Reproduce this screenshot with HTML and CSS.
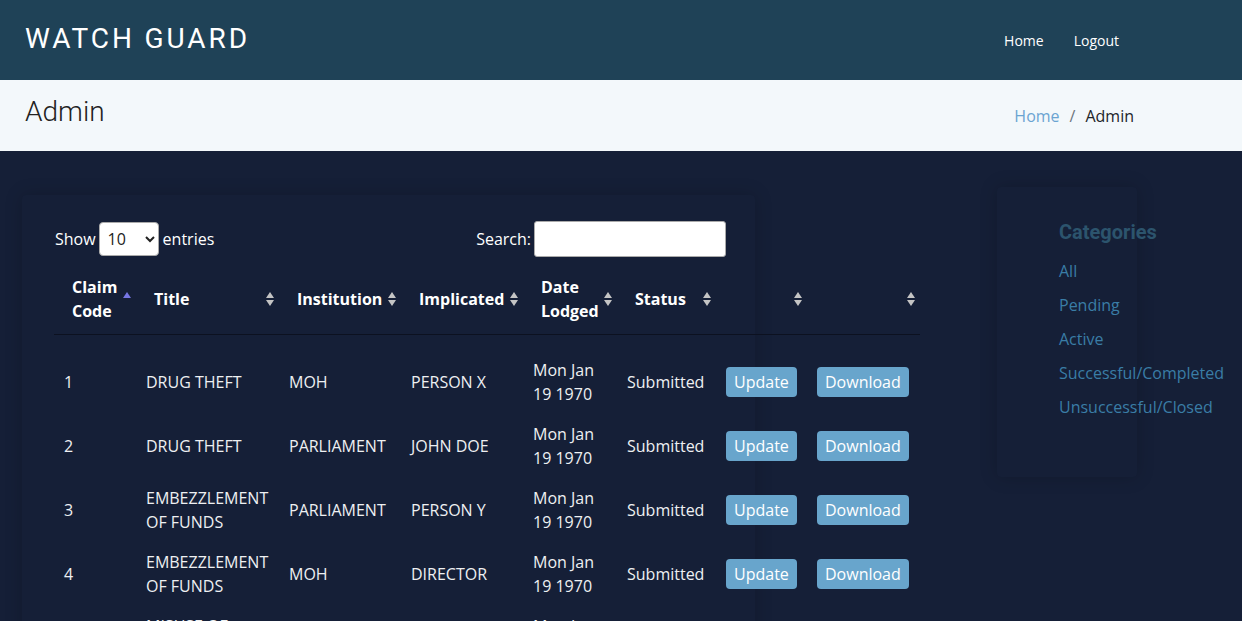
FILE: index.html
```html
<!DOCTYPE html>
<html lang="en">
<head>
<meta charset="utf-8">
<title>Watch Guard - Admin</title>
<link rel="stylesheet" href="styles.css">
</head>
<body>
<header class="topbar">
  <div class="brand">WATCH GUARD</div>
  <nav class="nav">
    <a href="#">Home</a>
    <a href="#">Logout</a>
  </nav>
</header>
<section class="pagebar">
  <h2 class="page-title">Admin</h2>
  <ol class="crumbs">
    <li><a href="#">Home</a></li>
    <li class="sep">/</li>
    <li class="current">Admin</li>
  </ol>
</section>
<main class="main">
  <div class="card table-card">
    <div class="controls">
      <label class="ctl">Show <select class="sel"><option>10</option><option>25</option><option>50</option></select> entries</label>
      <label class="ctl">Search: <input class="search" type="search"></label>
    </div>
    <table class="grid">
      <colgroup>
        <col class="c1"><col class="c2"><col class="c3"><col class="c4"><col class="c5"><col class="c6"><col class="c7"><col class="c8">
      </colgroup>
      <thead>
        <tr>
          <th class="sort asc">Claim Code</th>
          <th class="sort">Title</th>
          <th class="sort">Institution</th>
          <th class="sort">Implicated</th>
          <th class="sort">Date Lodged</th>
          <th class="sort">Status</th>
          <th class="sort"></th>
          <th class="sort"></th>
        </tr>
      </thead>
      <tbody>
        <tr class="first">
          <td>1</td><td>DRUG THEFT</td><td>MOH</td><td>PERSON X</td><td>Mon Jan 19 1970</td><td>Submitted</td>
          <td><button class="btn">Update</button></td><td><button class="btn">Download</button></td>
        </tr>
        <tr>
          <td>2</td><td>DRUG THEFT</td><td>PARLIAMENT</td><td>JOHN DOE</td><td>Mon Jan 19 1970</td><td>Submitted</td>
          <td><button class="btn">Update</button></td><td><button class="btn">Download</button></td>
        </tr>
        <tr>
          <td>3</td><td>EMBEZZLEMENT OF FUNDS</td><td>PARLIAMENT</td><td>PERSON Y</td><td>Mon Jan 19 1970</td><td>Submitted</td>
          <td><button class="btn">Update</button></td><td><button class="btn">Download</button></td>
        </tr>
        <tr>
          <td>4</td><td>EMBEZZLEMENT OF FUNDS</td><td>MOH</td><td>DIRECTOR</td><td>Mon Jan 19 1970</td><td>Submitted</td>
          <td><button class="btn">Update</button></td><td><button class="btn">Download</button></td>
        </tr>
        <tr>
          <td>5</td><td>MISUSE OF FUNDS</td><td>MOH</td><td>PERSON Z</td><td>Mon Jan 19 1970</td><td>Submitted</td>
          <td><button class="btn">Update</button></td><td><button class="btn">Download</button></td>
        </tr>
      </tbody>
    </table>
  </div>
  <aside class="card side-card">
    <h4 class="side-title">Categories</h4>
    <ul class="cats">
      <li><a href="#">All</a></li>
      <li><a href="#">Pending</a></li>
      <li><a href="#">Active</a></li>
      <li><a href="#">Successful/Completed</a></li>
      <li><a href="#">Unsuccessful/Closed</a></li>
    </ul>
  </aside>
</main>
</body>
</html>
```
FILE: styles.css
```css
* { box-sizing: border-box; }
html, body { margin: 0; padding: 0; }
body {
  background: #151f37;
  font-family: "Open Sans", "Liberation Sans", sans-serif;
  font-size: 16px;
  line-height: 24px;
  color: #e9ecef;
  height: 621px;
  overflow: hidden;
}
a { text-decoration: none; }

.topbar {
  height: 80px;
  background: #1f4257;
  display: flex;
  align-items: center;
  justify-content: space-between;
  padding: 0 123px 0 25px;
}
.brand {
  font-family: Roboto, "Liberation Sans", sans-serif;
  font-size: 28px;
  font-weight: 400;
  letter-spacing: 2.9px;
  color: #ffffff;
  line-height: 1;
  margin-top: -2px;
}
.nav { display: flex; gap: 30px; padding-top: 2px; }
.nav a { color: #ffffff; font-size: 14px; }

.pagebar {
  height: 71px;
  background: #f3f8fb;
  display: flex;
  align-items: center;
  justify-content: space-between;
  padding: 0 108px 0 25px;
}
.page-title {
  margin: 0;
  font-family: Roboto, "Liberation Sans", sans-serif;
  font-weight: 300;
  font-size: 28px;
  color: #222;
  line-height: 1;
  margin-top: -8px;
}
.crumbs {
  list-style: none;
  margin: 0;
  padding: 0;
  display: flex;
  font-size: 16px;
}
.crumbs a { color: #6ba4d2; }
.crumbs .sep { color: #6c757d; padding: 0 10px; }
.crumbs .current { color: #212529; }

.main {
  display: flex;
  align-items: flex-start;
  padding: 36px 0 0 22px;
}
.card {
  background: #151f37;
  box-shadow: 0 0 18px rgba(0, 0, 0, 0.18);
  border-radius: 4px;
}
.table-card {
  width: 733px;
  height: 600px;
  margin-top: 8px;
  padding: 26px 0 0 32px;
}
.controls {
  width: 672px;
  display: flex;
  justify-content: space-between;
  align-items: center;
  padding-left: 1px;
}
.ctl { display: flex; align-items: center; gap: 4px; color: #ffffff; }
.sel {
  width: 60px;
  height: 34px;
  border: 1px solid #aaa;
  border-radius: 4px;
  background: #fff;
  font-family: "Open Sans", "Liberation Sans", sans-serif;
  font-size: 16px;
  padding: 0 4px;
  color: #222;
  margin-left: -1px;
}
.search {
  width: 192px;
  height: 36px;
  border: 1px solid #aaa;
  border-radius: 3px;
  background: #fff;
  margin-left: -1px;
}

.grid {
  margin-top: 8px;
  width: 866px;
  table-layout: fixed;
  border-collapse: collapse;
}
.c1 { width: 82px; } .c2 { width: 143px; } .c3 { width: 122px; } .c4 { width: 122px; }
.c5 { width: 94px; } .c6 { width: 99px; } .c7 { width: 91px; } .c8 { width: 113px; }

.grid th {
  text-align: left;
  font-weight: 700;
  color: #ffffff;
  padding: 10px 18px;
  vertical-align: middle;
  border-bottom: 1px solid #0c1120;
  position: relative;
  height: 69px;
}
.sort::before, .sort::after {
  content: "";
  position: absolute;
  right: 5px;
  width: 0;
  height: 0;
  border-left: 4px solid transparent;
  border-right: 4px solid transparent;
}
.sort::before { top: calc(50% - 7px); border-bottom: 6px solid #c4c4c4; }
.sort::after { top: calc(50% + 1px); border-top: 6px solid #c4c4c4; }
.sort.asc::before { border-bottom-color: #7676e4; }
.sort.asc::after { border-top-color: transparent; }

.grid td {
  padding: 8px 10px;
  vertical-align: middle;
  color: #eef0f2;
  height: 64px;
}
.grid tr.first td { padding-top: 23px; height: 79px; }

.btn {
  background: #68a5cc;
  color: #ffffff;
  border: 0;
  border-radius: 4px;
  font-family: "Open Sans", "Liberation Sans", sans-serif;
  font-size: 16px;
  line-height: 24px;
  padding: 3px 8px;
  white-space: nowrap;
}

.side-card {
  margin-left: 242px;
  width: 140px;
  height: 290px;
  padding: 33px 0 0 62px;
  white-space: nowrap;
}
.side-title {
  margin: 0 0 15px;
  font-family: Roboto, "Liberation Sans", sans-serif;
  font-weight: 700;
  font-size: 20px;
  line-height: 24px;
  color: #2c546d;
}
.cats { list-style: none; margin: 0; padding: 0; display: flex; flex-direction: column; gap: 10px; }
.cats a { color: #3a7da6; font-size: 16px; }
```
